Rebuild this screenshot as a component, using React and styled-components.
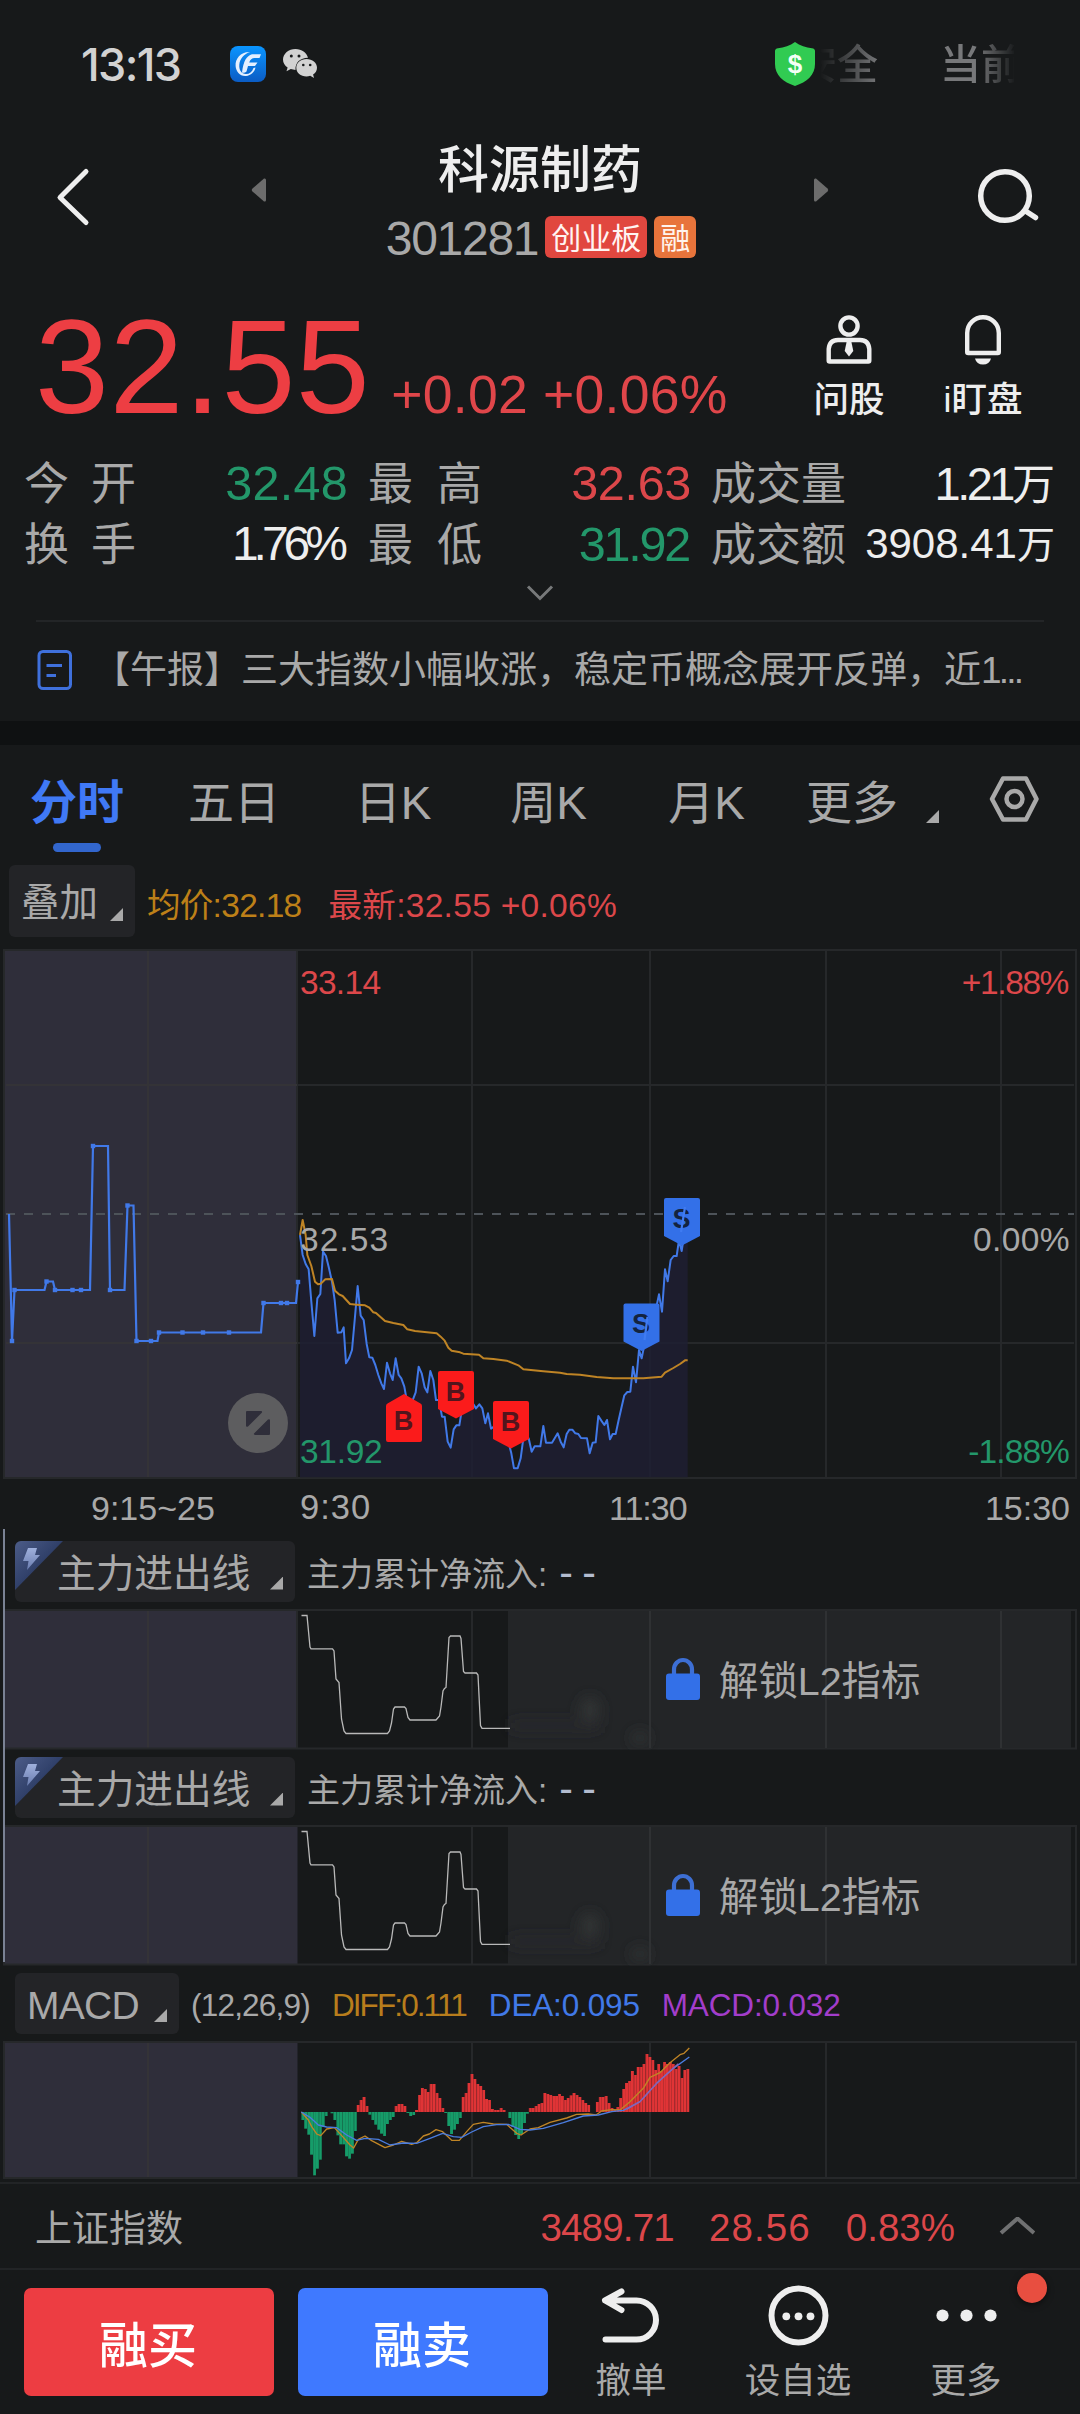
import React from "react";
import styled, { createGlobalStyle } from "styled-components";

const FONT = '"Liberation Sans", "Noto Sans CJK SC", sans-serif';

const C = {
  bg: "#17191a",
  tag: "#232427",
  grid: "#26282a",
  red: "#dc474a",
  green: "#23976a",
  grey: "#a9a9a9",
  white: "#eeeeee",
  blue: "#4179e8",
  amber: "#bf8425",
  shade: "#2f2e3a",
};

const GlobalStyle = createGlobalStyle`
  * { box-sizing: border-box; }
  html, body { margin: 0; background: ${C.bg}; }
  body { font-family: ${FONT}; }
  svg { display: block; flex: none; }
`;

const Screen = styled.div`
  width: 1080px;
  height: 2414px;
  overflow: hidden;
  background: ${C.bg};
  color: ${C.grey};
  display: flex;
  flex-direction: column;
`;

const Text = styled.span`
  display: block;
  flex: none;
  white-space: pre;
  line-height: 1;
  padding-top: ${(p) => (p.$drop === undefined ? 4 : p.$drop)}px;
  margin-right: ${(p) => p.$mr || 0}px;
  font-size: ${(p) => p.$size}px;
  color: ${(p) => p.$color || C.grey};
  font-weight: ${(p) => p.$weight || 400};
  letter-spacing: ${(p) => p.$track || 0}px;
`;

/* ---------- status bar ---------- */
const StatusBar = styled.div`
  height: 128px;
  flex: none;
  display: flex;
  align-items: center;
  padding: 0 66px 0 81px;
`;
const Clock = styled(Text)`
  width: 149px;
  font-family: Inter, sans-serif;
`;
const AppIcons = styled.div`
  display: flex;
  align-items: center;
  gap: 17px;
`;
const Ticker = styled.div`
  width: 194px;
  margin-left: 5px;
  display: flex;
  overflow: hidden;
  mask-image: linear-gradient(90deg, transparent 0, #000 60px, #000 156px, transparent 196px);
`;
const TickerText = styled(Text)`
  margin-left: -24px;
  margin-right: 62px;
`;
const ShieldWrap = styled.div`
  margin-left: auto;
`;

/* ---------- header ---------- */
const Header = styled.header`
  height: 162px;
  flex: none;
  display: flex;
  align-items: flex-start;
  padding: 0 40px 0 54px;
`;
const BackSlot = styled.div`
  width: 196px;
  padding-top: 37px;
`;
const ArrowSlot = styled.div`
  width: 18px;
  padding-top: 50px;
`;
const TitleBlock = styled.div`
  flex: 1;
  display: flex;
  flex-direction: column;
  align-items: center;
  padding-top: 14px;
  gap: 20px;
`;
const SearchSlot = styled.div`
  width: 208px;
  display: flex;
  justify-content: flex-end;
  padding-top: 38px;
`;
const CodeRow = styled.div`
  display: flex;
  align-items: center;
  height: 42px;
`;
const Badge = styled.span`
  height: 42px;
  padding: 0 6px;
  margin-left: 7px;
  display: flex;
  align-items: center;
  border-radius: 6px;
  background: ${(p) => p.$bg};
`;

/* ---------- quote ---------- */
const PriceRow = styled.section`
  height: 150px;
  flex: none;
  display: flex;
  align-items: flex-end;
  padding: 0 30px 11px 35px;
`;
const PriceGroup = styled.div`
  display: flex;
  align-items: baseline;
  gap: 21px;
  height: 128px;
  flex: 1;
`;
const QuickAction = styled.div`
  width: 134px;
  height: 125px;
  display: flex;
  flex-direction: column;
  align-items: center;
  padding-top: 9px;
  gap: 14px;
`;
const Stats = styled.section`
  flex: none;
  height: 122px;
  margin-top: 12px;
  padding: 0 24px;
  display: grid;
  grid-template-columns: 324px 323px 344px;
  column-gap: 20px;
  grid-auto-rows: 61px;
`;
const Stat = styled.div`
  display: flex;
  align-items: center;
  justify-content: space-between;
`;
const StatLabel = styled.span`
  width: ${(p) => p.$w}px;
  padding-top: 4px;
  display: flex;
  justify-content: space-between;
  font-size: 45px;
  line-height: 1;
`;
const ValueGroup = styled.span`
  display: flex;
  align-items: baseline;
`;
const ExpandRow = styled.div`
  flex: none;
  height: 46px;
  padding-top: 10px;
  display: flex;
  justify-content: center;
`;
const News = styled.section`
  flex: none;
  height: 101px;
  margin: 0 36px;
  border-top: 2px solid #232527;
  display: flex;
  align-items: center;
  padding: 0 2px 3px 1px;
`;
const NewsText = styled.div`
  display: flex;
  margin-left: 20px;
`;
const SectionGap = styled.div`
  flex: none;
  height: 24px;
  background: #0f1112;
`;

/* ---------- tabs ---------- */
const Tabs = styled.nav`
  flex: none;
  height: 120px;
  display: grid;
  grid-template-columns: 154px 160px 158px 153px 163px 178px 1fr;
`;
const Tab = styled.div`
  display: flex;
  flex-direction: column;
  align-items: center;
  padding-top: 31px;
`;
const TabMark = styled.i`
  margin-top: 17px;
  width: 48px;
  height: 9px;
  border-radius: 5px;
  background: #3266cd;
`;
const MoreTab = styled.div`
  display: flex;
  align-items: flex-start;
  padding: 31px 0 0 18px;
  gap: 28px;
`;
const CornerMark = styled.i`
  width: 13px;
  height: 13px;
  margin-top: ${(p) => p.$top || 0}px;
  flex: none;
  background: ${C.grey};
  clip-path: polygon(100% 0, 100% 100%, 0 100%);
`;
const GearSlot = styled.div`
  padding: 30px 0 0 22px;
`;

/* ---------- charts ---------- */
const LegendRow = styled.div`
  flex: none;
  height: ${(p) => p.$h}px;
  padding: ${(p) => p.$pad};
  display: flex;
  align-items: flex-start;
`;
const Pill = styled.div`
  position: relative;
  width: ${(p) => p.$w}px;
  height: ${(p) => p.$h}px;
  border-radius: 6px;
  background: ${C.tag};
  display: flex;
  align-items: center;
  padding-left: ${(p) => p.$pl}px;
  padding-right: 12px;
  justify-content: space-between;
  overflow: hidden;
`;
const PillCorner = styled.div`
  position: absolute;
  left: 0;
  top: 0;
`;
const Legend = styled.div`
  display: flex;
  align-items: center;
  height: ${(p) => p.$h}px;
  margin-left: ${(p) => p.$ml || 0}px;
  gap: ${(p) => p.$gap || 0}px;
`;
const TimeAxis = styled.div`
  flex: none;
  height: 50px;
  display: grid;
  grid-template-columns: 300px 309px 1fr auto;
  align-items: center;
  padding: 7px 10px 0 0;
  & > :first-child { padding-left: 91px; }
`;
const FlowGroup = styled.section`
  flex: none;
  position: relative;
  &::after {
    content: "";
    position: absolute;
    left: 3px;
    top: 0;
    width: 2px;
    height: 433px;
    background: #7a8294;
  }
`;
const FlowPanel = styled.div`
  height: 216px;
`;
const PlotArea = styled.div`
  position: relative;
  height: ${(p) => p.$h}px;
`;
const Unlock = styled.div`
  position: absolute;
  left: 508px;
  top: 1px;
  width: 563px;
  height: 138px;
  padding-left: 158px;
  display: flex;
  align-items: center;
  gap: 19px;
`;
const LockSlot = styled.div`
  padding-bottom: 2px;
`;

/* ---------- bottom ---------- */
const IndexRow = styled.section`
  flex: none;
  height: 88px;
  margin-top: 3px;
  border-top: 2px solid #222426;
  border-bottom: 2px solid #222426;
  display: flex;
  align-items: center;
  padding: 2px 45px 0 35px;
`;
const IndexValues = styled.div`
  margin-left: auto;
  display: flex;
  align-items: center;
  gap: 35px;
`;
const BottomBar = styled.footer`
  flex: none;
  height: 144px;
  padding: 18px 0 0 24px;
  display: flex;
  align-items: flex-start;
`;
const TradeButton = styled.div`
  width: 250px;
  height: 108px;
  margin-right: ${(p) => p.$mr}px;
  border-radius: 7px;
  background: ${(p) => p.$bg};
  display: flex;
  align-items: center;
  justify-content: center;
  padding: 4px 2px 0 0;
`;
const Action = styled.div`
  position: relative;
  width: 168px;
  height: 126px;
  display: flex;
  flex-direction: column;
  align-items: center;
  gap: 11px;
  margin-top: -7px;
`;
const Dot = styled.i`
  position: absolute;
  left: 134px;
  top: -8px;
  width: 30px;
  height: 30px;
  border-radius: 50%;
  background: #e84e40;
  box-shadow: 0 2px 6px rgba(0, 0, 0, 0.5);
`;

/* ---------- chart data, in thirds of a pixel from each plot origin ---------- */
const PRICE =
  "30,285 38,345 47,372 56,388 64,485 73,588 82,475 91,462 99,335 108,348 117,385 126,425 134,480 143,578 154,577 161,562 168,670 177,655 186,630 195,530 203,438 212,527 221,540 230,612 238,652 247,653 256,675 265,705 274,730 282,747 291,668 300,700 308,720 317,655 326,705 334,715 343,740 350,780 360,800 369,778 377,757 386,680 395,700 404,742 412,757 421,693 430,720 438,780 447,780 456,830 464,830 473,905 482,923 491,868 499,856 508,856 517,800 530,780 545,785 558,805 568,793 577,805 586,850 594,820 603,866 612,860 625,870 640,890 655,905 664,940 672,985 683,985 692,955 700,895 716,895 725,935 734,919 751,919 760,858 768,908 786,908 803,880 812,905 821,922 830,882 838,869 847,869 856,880 865,882 873,894 891,895 899,940 908,908 917,907 925,828 934,842 943,855 951,840 960,898 968,882 977,882 986,840 995,800 1003,766 1012,756 1021,755 1029,680 1038,727 1047,630 1055,655 1064,610 1073,600 1085,560 1095,520 1107,463 1116,515 1125,388 1133,424 1142,360 1151,348 1160,348 1167,300 1175,333 1180,300 1193,280";
const AVERAGE =
  "30,285 38,240 47,285 52,345 64,378 75,425 84,433 92,431 106,418 126,417 135,452 147,463 158,468 180,492 200,494 225,496 238,503 250,517 258,519 285,543 310,549 340,555 352,568 375,573 440,580 452,590 464,602 475,623 485,632 510,637 520,641 567,644 580,655 610,657 650,662 685,676 700,688 760,694 810,698 830,702 870,704 920,711 970,715 1060,715 1115,710 1125,698 1150,684 1170,672 1185,661 1193,661";
const AUCTION =
  "9,1214 12,1341 14.5,1290 44.5,1290 46.5,1281.5 53,1281.5 55,1290 90,1290 93,1146 108,1146 110,1290 124.5,1290 127.5,1205.5 133.5,1205.5 136.5,1341 157.5,1341 159,1332.5 261,1332.5 263.5,1303 296,1303 298,1282";
const AUCTION_DOTS = [
  [12, 1341], [14.5, 1290], [46.5, 1281.5], [55, 1290], [72.5, 1290], [81, 1290], [93, 1146], [110, 1290],
  [127.5, 1205.5], [136.5, 1341], [151, 1341], [159, 1332.5], [182.5, 1332.5], [203, 1332.5], [229, 1332.5],
  [263.5, 1303], [281, 1303], [287, 1303], [298, 1282],
];
const FLOW =
  "301.5,6.5 307,6.5 310,38 311,39.8 332.5,39.8 334,42 336,70 339,73.5 341.5,110 344,122 346,124.5 387.5,124.5 389.5,122 391.5,114 393.5,100 395,98 404.5,98 406,99.5 408,108.5 410,111 436,111 439.5,107 441,98 443,82 444.5,79.5 446,78.5 449,28.5 450.5,27 460,27 461,29.5 463.5,62.5 465,64 476.5,64 478,66 480.5,116.5 482,119.3 510,119.3";
const DIFF =
  "34,246 55,270 65,290 80,312 92,317 110,297 133,293 160,322 180,345 191,354 205,328 225,318 245,332 285,353 310,345 335,334 365,343 380,338 400,318 418,312 438,299 458,305 485,331 508,331 530,305 550,283 580,277 610,282 650,283 680,310 693,315 720,297 745,293 780,277 830,264 860,253 895,252 918,255 935,243 965,239 990,240 1020,215 1060,175 1080,142 1110,128 1140,98 1170,74 1182,70 1198,54";
const DEA =
  "34,246 60,262 85,285 110,291 140,293 170,315 200,331 225,325 265,328 300,345 340,339 380,340 420,325 458,310 490,320 515,322 545,306 580,290 620,284 655,283 690,298 720,300 760,295 820,278 880,258 925,255 965,245 1000,241 1050,215 1100,160 1150,115 1198,81";
const BARS = [
  -24, -50, -68, -128, -190, -170, -143, -45, -12, 0, -4, -24, -70, -97, -97, -133, -140, -125, -57, 21, 36, 45, 18,
  -8, -24, -38, -53, -65, -72, -36, -24, -15, 18, 24, 24, 18, -3, -12, -9, 6, 51, 72, 69, 60, 84, 84, 57, 42, 12, -3,
  -42, -66, -53, -36, -18, 45, 57, 87, 114, 99, 84, 78, 66, 39, 36, 9, 6, 6, 12, 6, 0, -18, -45, -69, -81, -66, -33,
  -5, 12, 12, 18, 24, 27, 57, 54, 51, 48, 48, 54, 48, 36, 42, 50, 57, 51, 45, 36, 27, 21, 0, 0, 30, 45, 45, 48, 27,
  12, 6, 15, 42, 69, 87, 93, 123, 111, 135, 135, 144, 174, 165, 156, 126, 144, 123, 150, 144, 150, 144, 129, 138,
  102, 126, 129,
];

const Frame = ({ top, height, verticals }) => (
  <g stroke={C.grid} strokeWidth="2" fill="none">
    <rect x="3" y={top} width="294.5" height={height} fill={C.shade} stroke="none" />
    <path d={`M148 ${top}V${top + height}`} stroke="#343337" />
    {verticals.map((x) => (
      <path key={x} d={`M${x} ${top}V${top + height}`} />
    ))}
    <rect x="4" y={top} width="1072" height={height} />
  </g>
);

const Marker = ({ x, y, letter, fill, ink, up }) => (
  <g transform={`translate(${x} ${y})`}>
    <path
      fill={fill}
      d={
        up
          ? "M1.5 9.5L18 0L34.500 9.500Q36 10.300 36 12V46Q36 48 34 48H2Q0 48 0 46V12Q0 10.300 1.500 9.500Z"
          : "M2 0H34Q36 0 36 2V38L18 47.500L0 38V2Q0 0 2 0Z"
      }
    />
    <text x="17.500" y={up ? 36 : 29.500} textAnchor="middle" fontSize="27" fontWeight="700" fill={ink}>
      {letter}
    </text>
  </g>
);

const AxisText = ({ x, y, fill, end, track, children }) => (
  <text x={x} y={y} fill={fill} fontSize="33.500" textAnchor={end ? "end" : "start"} letterSpacing={track || 0}>
    {children}
  </text>
);

const PriceChart = () => (
  <svg width="1080" height="530" viewBox="0 949 1080 530" fontFamily={FONT}>
    <Frame top={950} height={528} verticals={[297, 472, 650, 826, 1001]} />
    <g stroke={C.grid} strokeWidth="2">
      <path d="M297 1085H1074M297 1343H1074" />
      <path d="M6 1085H297M6 1343H297" stroke="#343337" />
      <path d="M6 1214H1074" stroke="#4d5359" strokeDasharray="9 9" />
    </g>
    <g transform="translate(290 1140) scale(0.33333)">
      <polygon points={`30,1012 ${PRICE} 1193,1012`} fill="#1e1e33" fillOpacity="0.85" />
    </g>
    <AxisText x={300} y={994} fill={C.red} track={-0.7}>33.14</AxisText>
    <AxisText x={1068} y={994} fill={C.red} track={-1.4} end>+1.88%</AxisText>
    <AxisText x={1070} y={1251} fill={C.grey} track={0.4} end>0.00%</AxisText>
    <AxisText x={300} y={1463} fill={C.green} track={-0.3}>31.92</AxisText>
    <AxisText x={1069} y={1463} fill={C.green} track={-0.9} end>-1.88%</AxisText>
    <polyline points={AUCTION} fill="none" stroke={C.blue} strokeWidth="2.200" />
    {AUCTION_DOTS.map(([x, y]) => (
      <rect key={x} x={x - 2.2} y={y - 2.2} width="4.400" height="4.400" fill={C.blue} />
    ))}
    <g transform="translate(290 1140) scale(0.33333)" fill="none" strokeWidth="6" strokeLinejoin="round">
      <polyline points={PRICE} stroke={C.blue} />
      <polyline points={AVERAGE} stroke={C.amber} />
    </g>
    <AxisText x={300} y={1251} fill={C.grey} track={1.1}>32.53</AxisText>
    <Marker x={386} y={1394} letter="B" fill="#fb1b1b" ink="#52151d" up />
    <Marker x={438} y={1371} letter="B" fill="#fb1b1b" ink="#52151d" />
    <Marker x={493} y={1401} letter="B" fill="#fb1b1b" ink="#52151d" />
    <Marker x={623.5} y={1303.5} letter="S" fill="#3370e8" ink="#13233f" />
    <Marker x={664} y={1198} letter="S" fill="#3370e8" ink="#13233f" />
    <path d="M647.500 1317L644.500 1340M685 1207L681 1232" stroke="#3f7bf2" strokeWidth="2.200" />
    <circle cx="258" cy="1423" r="30" fill="#5d5d5f" />
    <path
      d="M247 1411H261Q263 1411.500 261.500 1413L248 1426.500Q246 1427.500 246 1425.500V1412Q246 1411 247 1411ZM269 1435H255Q253 1434.500 254.500 1433L268 1419.500Q270 1418.500 270 1420.500V1434Q270 1435 269 1435Z"
      fill={C.shade}
    />
  </svg>
);

const FlowChart = ({ verticals, overlay, id }) => (
  <svg width="1080" height="141" viewBox="0 0 1080 141">
    <defs>
      <filter id={id} x="-50%" y="-50%" width="200%" height="200%">
        <feGaussianBlur stdDeviation="7" />
      </filter>
    </defs>
    <Frame top={1} height={138.500} verticals={verticals} />
    <rect x="508" y="2" width="563" height="137" fill="#232527" />
    <g fill="#333436" filter={`url(#${id})`}>
      <ellipse cx="590" cy="100" rx="10" ry="12" />
      <ellipse cx="640" cy="129" rx="9" ry="6" />
      <path d="M510 113H600V120H510Z" fill="#2a2b2d" />
    </g>
    <g stroke="#2f3133" strokeWidth="2">
      {overlay.map((x) => (
        <path key={x} d={`M${x} 2V139`} />
      ))}
    </g>
    <polyline points={FLOW} fill="none" stroke="#b9b9b9" strokeWidth="1.300" />
  </svg>
);

const MacdChart = () => (
  <svg width="1080" height="138" viewBox="0 2041 1080 138">
    <Frame top={2042} height={136} verticals={[472, 650, 826]} />
    <g transform="translate(290 2030) scale(0.33333)">
      {BARS.map((v, i) => (
        <g key={i}>
          <rect
            x={34 + i * 8.75}
            y={v > 0 ? 246 - v : 246}
            width="8.750"
            height={Math.abs(v)}
            fill={v > 0 ? "#e03436" : "#169c69"}
          />
          {i % 2 === 0 && (
            <rect
              x={34 + i * 8.75}
              y={v > 0 ? 246 - v : 246}
              width="2.500"
              height={Math.abs(v)}
              fill="#17191a"
              fillOpacity="0.220"
            />
          )}
        </g>
      ))}
      <polyline points={DIFF} fill="none" stroke="#c08526" strokeWidth="4" strokeLinejoin="round" />
      <polyline points={DEA} fill="none" stroke="#4b7de0" strokeWidth="4" strokeLinejoin="round" />
      <path d="M1010 238L1050 215L1100 160L1165 101" fill="none" stroke="#8a63b4" strokeWidth="4" />
    </g>
  </svg>
);

const BrokerIcon = () => (
  <svg width="36" height="36" viewBox="0 0 36 36">
    <defs>
      <linearGradient id="broker" x1="0" y1="0" x2="0" y2="1">
        <stop offset="0" stopColor="#0a95ff" />
        <stop offset="1" stopColor="#0b5cc4" />
      </linearGradient>
    </defs>
    <rect width="36" height="36" rx="8" fill="url(#broker)" />
    <path
      d="M20 6C11 5.500 5 12.500 5.600 20C6 25.500 10 30.500 16 30C21 29.500 24.500 26 25.500 21.500L23.500 22C22 26 19.500 28 16 28C11.500 28 8.800 24 9.300 18.500C10 12.500 14 8 20 6Z"
      fill="#e4f0ff"
    />
    <path
      d="M31 8.200H22C16.500 10 13.500 14.500 12 26.500Q14.500 27.500 16.500 25.500L18 20H25L27.500 16.500H19.200C20.200 13.500 22 12 24.500 12H29.500Z"
      fill="#e4f0ff"
    />
  </svg>
);

const WeChatIcon = () => (
  <svg width="34" height="30" viewBox="0 0 34 30">
    <path
      d="M12.500 0C5.600 0 0 4.700 0 10.500C0 13.800 1.800 16.700 4.600 18.600L3.500 22.300L7.800 20.100C9.300 20.600 10.900 20.900 12.500 20.900C12 13.500 17.500 8.600 25 8.700C23.800 3.800 18.700 0 12.500 0Z"
      fill="#d2d2d2"
    />
    <path
      d="M23.500 10C17.700 10 13.300 13.800 13.300 18.700C13.300 23.600 17.700 27.400 23.500 27.400C24.800 27.400 26 27.200 27.200 26.800L31 29L30.100 25.600C32.500 24 34 21.500 34 18.700C34 13.800 29.300 10 23.500 10Z"
      fill="#d2d2d2"
    />
    <g fill={C.bg}>
      <circle cx="8.300" cy="7" r="1.500" />
      <circle cx="16" cy="7" r="1.500" />
      <circle cx="20.300" cy="16" r="1.300" />
      <circle cx="27.200" cy="16" r="1.300" />
    </g>
  </svg>
);

const ShieldIcon = () => (
  <svg width="40" height="44" viewBox="0 0 40 44" fontFamily={FONT}>
    <path
      d="M20 0C25 4 31 5.500 37 6.200Q40 6.700 40 9V22C40 33 32 40 20 44C8 40 0 33 0 22V9Q0 6.700 3 6.200C9 5.500 15 4 20 0Z"
      fill="#31cb52"
    />
    <text x="20" y="31" textAnchor="middle" fontSize="26" fontWeight="700" fill="#f4fff6">
      $
    </text>
  </svg>
);

const BoltCorner = () => (
  <svg width="48" height="49" viewBox="0 0 48 49">
    <defs>
      <linearGradient id="corner" x1="0" y1="0" x2="0.600" y2="0.600">
        <stop offset="0" stopColor="#4c5c88" />
        <stop offset="1" stopColor="#2a3a63" />
      </linearGradient>
      <linearGradient id="bolt" x1="0" y1="0" x2="0" y2="1">
        <stop offset="0" stopColor="#9fb0dc" />
        <stop offset="1" stopColor="#6a7db0" />
      </linearGradient>
    </defs>
    <path d="M0 0H48L0 49Z" fill="url(#corner)" />
    <path d="M13 7H22L20 14H25L12 29L13.500 20H8Z" fill="url(#bolt)" />
  </svg>
);

const LockIcon = () => (
  <svg width="34" height="43" viewBox="0 0 34 43">
    <path d="M8 18V12.500A9 9.500 0 0 1 26 12.500V18" fill="none" stroke="#3d6fd4" strokeWidth="4.200" />
    <rect y="16.500" width="34" height="26.500" rx="3" fill="#3370e8" />
  </svg>
);

const FlowSection = ({ verticals, overlay, id }) => (
  <FlowPanel>
    <LegendRow $h={80} $pad="12px 0 0 15px">
      <Pill $w={280} $h={61} $pl={42}>
        <PillCorner>
          <BoltCorner />
        </PillCorner>
        <Text $size={38.7} $drop={6}>主力进出线</Text>
        <CornerMark $top={23} />
      </Pill>
      <Legend $h={63} $ml={12} $gap={12}>
        <Text $size={33}>主力累计净流入:</Text>
        <Text $size={41} $color="#b3bccf" $track={9.5} $drop={0}>--</Text>
      </Legend>
    </LegendRow>
    <PlotArea $h={136}>
      <FlowChart id={id} verticals={verticals} overlay={overlay} />
      <Unlock>
        <LockSlot>
          <LockIcon />
        </LockSlot>
        <Text $size={39.4} $drop={6}>解锁L2指标</Text>
      </Unlock>
    </PlotArea>
  </FlowPanel>
);

const Label = ({ text, w }) => (
  <StatLabel $w={w}>
    {[...text].map((ch) => (
      <span key={ch}>{ch}</span>
    ))}
  </StatLabel>
);

export default function App() {
  return (
    <Screen>
      <GlobalStyle />
      <StatusBar>
        <Clock $size={45} $weight={500} $color="#d2d2d2" $track={-1.6} $drop={0}>13:13</Clock>
        <AppIcons>
          <BrokerIcon />
          <WeChatIcon />
        </AppIcons>
        <ShieldWrap>
          <ShieldIcon />
        </ShieldWrap>
        <Ticker>
          <TickerText $size={41} $color="#77787a" $weight={500} $drop={2}>安全</TickerText>
          <Text $size={41} $color="#77787a" $weight={500} $drop={2}>当前</Text>
        </Ticker>
      </StatusBar>

      <Header>
        <BackSlot>
          <svg width="36" height="64" viewBox="0 0 36 64" fill="none" stroke={C.white} strokeWidth="5" strokeLinecap="round" strokeLinejoin="round">
            <path d="M32 6.500L6 32.500L32 57.500" />
          </svg>
        </BackSlot>
        <ArrowSlot>
          <svg width="16" height="24" viewBox="0 0 16 24">
            <path d="M2.500 10.500L14 0.500Q16 0 16 2V22Q16 24 14 23.500L2.500 13.500Q1 12 2.500 10.500Z" fill="#6c6c6c" />
          </svg>
        </ArrowSlot>
        <TitleBlock>
          <Text $size={51} $weight={500} $color={C.white} $mr={2} $drop={3}>科源制药</Text>
          <CodeRow>
            <Text $size={48} $track={-1.3}>301281</Text>
            <Badge $bg="#e1473f">
              <Text $size={30} $color="#fff4f2" $drop={3}>创业板</Text>
            </Badge>
            <Badge $bg="#e8743b">
              <Text $size={30} $color="#fff4ee" $drop={3}>融</Text>
            </Badge>
          </CodeRow>
        </TitleBlock>
        <ArrowSlot>
          <svg width="16" height="24" viewBox="0 0 16 24">
            <path d="M13.500 10.500L2 0.500Q0 0 0 2V22Q0 24 2 23.500L13.500 13.500Q15 12 13.500 10.500Z" fill="#6c6c6c" />
          </svg>
        </ArrowSlot>
        <SearchSlot>
          <svg width="64" height="60" viewBox="0 0 64 60" fill="none" stroke={C.white} strokeWidth="5.500">
            <circle cx="29" cy="30" r="24.300" />
            <path d="M49.500 45L59.500 51.500" strokeLinecap="round" />
          </svg>
        </SearchSlot>
      </Header>

      <PriceRow>
        <PriceGroup>
          <Text $size={133} $color="#ed3e43" $track={0.5} $drop={0}>32.55</Text>
          <Text $size={53.5} $color="#e0464a" $track={0.25} $drop={0}>+0.02 +0.06%</Text>
        </PriceGroup>
        <QuickAction>
          <svg width="46" height="52" viewBox="0 0 46 52" fill="none" stroke={C.white} strokeWidth="4.400">
            <circle cx="23" cy="13" r="8.600" />
            <path d="M2.700 47.500V36Q3.500 27 12 27H34Q42.500 27 43.300 36V47.500Q43.300 48.500 42.300 48.500H3.700Q2.700 48.500 2.700 47.500Z" />
            <path d="M21 27H25L27.300 38L23 43.500L18.700 38Z" fill={C.white} stroke="none" />
          </svg>
          <Text $size={35.5} $color={C.white} $weight={500}>问股</Text>
        </QuickAction>
        <QuickAction>
          <svg width="46" height="52" viewBox="0 0 46 52" fill="none" stroke={C.white} strokeWidth="4.400">
            <path d="M7.200 39V20A15.800 15.800 0 0 1 38.800 20V39Q38.800 40 37.800 40H8.200Q7.200 40 7.200 39Z" />
            <path d="M15 45.500H31Q29.500 51.500 23 51.500Q16.500 51.500 15 45.500Z" fill={C.white} stroke="none" />
          </svg>
          <Text $size={35.5} $color={C.white} $weight={500}>i盯盘</Text>
        </QuickAction>
      </PriceRow>

      <Stats>
        <Stat>
          <Label text="今开" w={112} />
          <Text $size={48.5} $color={C.green} $track={0.3} $drop={1}>32.48</Text>
        </Stat>
        <Stat>
          <Label text="最高" w={114} />
          <Text $size={48.5} $color={C.red} $track={-0.3} $drop={1}>32.63</Text>
        </Stat>
        <Stat>
          <Label text="成交量" w={135} />
          <ValueGroup>
            <Text $size={47} $color={C.white} $track={-3.5} $drop={1}>1.21</Text>
            <Text $size={43} $color={C.white} $drop={1}>万</Text>
          </ValueGroup>
        </Stat>
        <Stat>
          <Label text="换手" w={112} />
          <Text $size={48} $color={C.white} $track={-5} $mr={5} $drop={1}>1.76%</Text>
        </Stat>
        <Stat>
          <Label text="最低" w={114} />
          <Text $size={48.5} $color={C.green} $track={-2.2} $mr={2} $drop={1}>31.92</Text>
        </Stat>
        <Stat>
          <Label text="成交额" w={135} />
          <ValueGroup>
            <Text $size={42} $color={C.white} $drop={1}>3908.41</Text>
            <Text $size={38} $color={C.white} $drop={1}>万</Text>
          </ValueGroup>
        </Stat>
      </Stats>

      <ExpandRow>
        <svg width="30" height="20" viewBox="0 0 30 20" fill="none" stroke="#77797a" strokeWidth="3">
          <path d="M3 2.500L15 14.500L27 2.500" />
        </svg>
      </ExpandRow>

      <News>
        <svg width="36" height="42" viewBox="0 0 36 42" fill="none" stroke="#3f70dc" strokeWidth="3">
          <rect x="2" y="2.500" width="31.500" height="37" rx="4" />
          <path d="M9.500 16.500H25M9.500 26.500H19" />
        </svg>
        <NewsText>
          <Text $size={37} $drop={0}>【午报】三大指数小幅收涨，稳定币概念展开反弹，近</Text>
          <Text $size={37} $drop={0} $track={-2.8}>1...</Text>
        </NewsText>
      </News>
      <SectionGap />

      <Tabs>
        <Tab>
          <Text $size={47} $weight={700} $color="#4079f5" $drop={3}>分时</Text>
          <TabMark />
        </Tab>
        <Tab><Text $size={46}>五日</Text></Tab>
        <Tab><Text $size={46}>日K</Text></Tab>
        <Tab><Text $size={46}>周K</Text></Tab>
        <Tab><Text $size={46}>月K</Text></Tab>
        <MoreTab>
          <Text $size={46}>更多</Text>
          <CornerMark $top={34} />
        </MoreTab>
        <GearSlot>
          <svg width="52" height="48" viewBox="0 0 52 48" fill="none" stroke={C.grey} strokeWidth="4.500" strokeLinejoin="round">
            <path d="M15 3.500H38L48.500 24L38 44.500H15L4 24Z" />
            <circle cx="26.500" cy="24" r="8" />
          </svg>
        </GearSlot>
      </Tabs>

      <LegendRow $h={84} $pad="0 0 0 9px">
        <Pill $w={126} $h={72} $pl={12}>
          <Text $size={38.5}>叠加</Text>
          <CornerMark $top={27} />
        </Pill>
        <Legend $h={78} $ml={12} $gap={27}>
          <Text $size={33.5} $color="#bd8018" $track={-0.7}>均价:32.18</Text>
          <Text $size={33.5} $color={C.red} $track={0.3}>最新:32.55 +0.06%</Text>
        </Legend>
      </LegendRow>
      <PriceChart />
      <TimeAxis>
        <Text $size={34} $drop={0}>9:15~25</Text>
        <Text $size={34.5} $drop={0} $track={1}>9:30</Text>
        <Text $size={34} $drop={0} $track={-1}>11:30</Text>
        <Text $size={34} $drop={0}>15:30</Text>
      </TimeAxis>

      <FlowGroup>
        <FlowSection id="haze1" verticals={[297, 472, 650, 826, 1001]} overlay={[650, 826, 1001]} />
        <FlowSection id="haze2" verticals={[472, 650, 826]} overlay={[650, 826]} />
      </FlowGroup>

      <LegendRow $h={80} $pad="12px 0 0 15px">
        <Pill $w={164} $h={61} $pl={12}>
          <Text $size={39} $track={-0.7}>MACD</Text>
          <CornerMark $top={24} />
        </Pill>
        <Legend $h={62} $ml={12} $gap={22}>
          <Text $size={31.5} $track={-0.8}>(12,26,9)</Text>
          <Text $size={31.5} $color="#b87d1c" $track={-1.9} $mr={1}>DIFF:0.111</Text>
          <Text $size={31.5} $color={C.blue} $track={-0.15}>DEA:0.095</Text>
          <Text $size={31.5} $color="#a33dcb" $track={-0.15}>MACD:0.032</Text>
        </Legend>
      </LegendRow>
      <MacdChart />

      <IndexRow>
        <Text $size={37}>上证指数</Text>
        <IndexValues>
          <Text $size={38.5} $color={C.red} $track={-0.8} $drop={2}>3489.71</Text>
          <Text $size={38.5} $color={C.red} $track={1.1} $drop={2}>28.56</Text>
          <Text $size={38.5} $color={C.red} $drop={2}>0.83%</Text>
        </IndexValues>
        <svg width="80" height="20" viewBox="0 0 80 20" fill="none" stroke="#707172" strokeWidth="4">
          <path d="M46 16L62.500 1.500L79 16" />
        </svg>
      </IndexRow>

      <BottomBar>
        <TradeButton $bg="#ed3d42" $mr={24}>
          <Text $size={49} $weight={500} $color="#fff">融买</Text>
        </TradeButton>
        <TradeButton $bg="#3f79ff" $mr={-1}>
          <Text $size={49} $weight={500} $color="#fff">融卖</Text>
        </TradeButton>
        <Action>
          <svg width="64" height="68" viewBox="0 0 64 68" fill="none" stroke={C.white} strokeWidth="6" strokeLinecap="round" strokeLinejoin="round">
            <path d="M22.500 10.500L6 19.500L22.500 29M7 19.500H37.500A19.500 19.500 0 0 1 37.500 58.500H6.500" />
          </svg>
          <Text $size={35.5}>撤单</Text>
        </Action>
        <Action>
          <svg width="64" height="68" viewBox="0 0 64 68">
            <circle cx="31.500" cy="34.500" r="27" fill="none" stroke={C.white} strokeWidth="6" />
            <g fill={C.white}>
              <circle cx="19.300" cy="35.300" r="3.900" />
              <circle cx="31.500" cy="35.300" r="3.900" />
              <circle cx="43.500" cy="35.300" r="3.900" />
            </g>
          </svg>
          <Text $size={35.5} $mr={2}>设自选</Text>
        </Action>
        <Action>
          <svg width="64" height="68" viewBox="0 0 64 68" fill={C.white}>
            <circle cx="7.500" cy="34.500" r="6.100" />
            <circle cx="31.500" cy="34.500" r="6.100" />
            <circle cx="55.500" cy="34.500" r="6.100" />
          </svg>
          <Text $size={35.5} $mr={2}>更多</Text>
          <Dot />
        </Action>
      </BottomBar>
    </Screen>
  );
}
